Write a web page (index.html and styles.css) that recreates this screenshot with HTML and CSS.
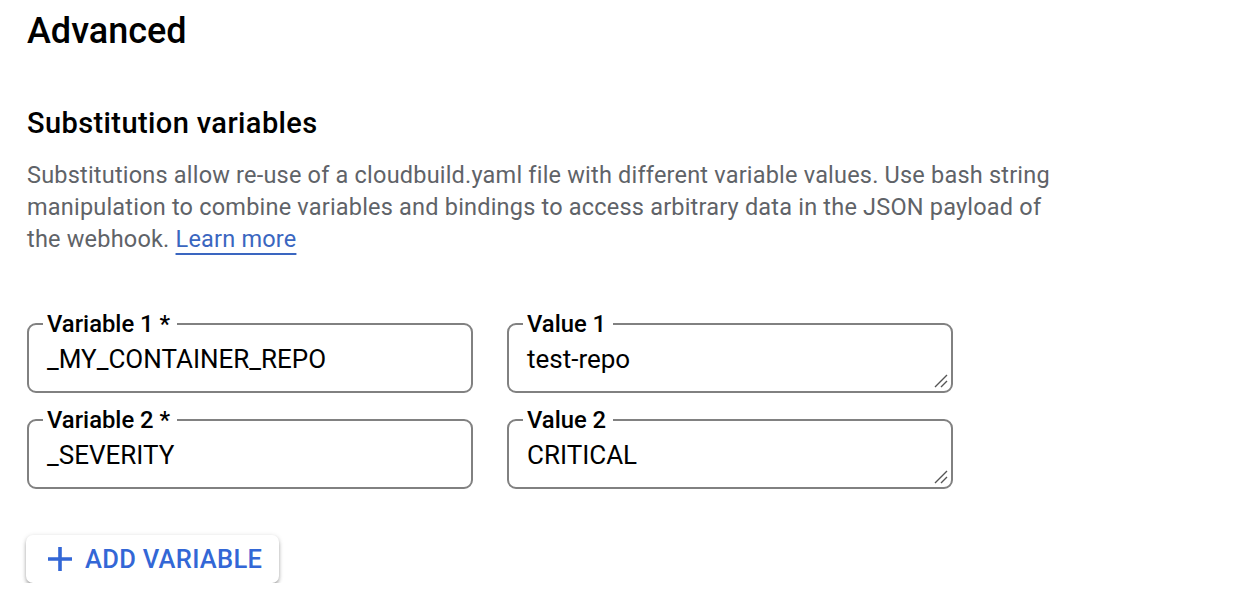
FILE: index.html
```html
<!DOCTYPE html>
<html lang="en">
<head>
<meta charset="utf-8">
<title>Advanced</title>
<link rel="stylesheet" href="styles.css">
</head>
<body>
<main class="page">
  <h1 class="title">Advanced</h1>
  <h2 class="subtitle">Substitution variables</h2>
  <p class="desc">Substitutions allow re-use of a cloudbuild.yaml file with different variable values. Use bash string manipulation to combine variables and bindings to access arbitrary data in the JSON payload of the webhook. <a class="link" href="#">Learn more</a></p>

  <div class="fields">
    <fieldset class="field">
      <legend class="label">Variable 1 *</legend>
      <div class="value">_MY_CONTAINER_REPO</div>
    </fieldset>
    <fieldset class="field">
      <legend class="label">Value 1</legend>
      <div class="value">test-repo</div>
      <svg class="resizer" width="16" height="16" viewBox="0 0 16 16"><path d="M2 14 L14 2 M8 14 L14 8" stroke="#555" stroke-width="1.4" fill="none"/></svg>
    </fieldset>
    <fieldset class="field">
      <legend class="label">Variable 2 *</legend>
      <div class="value">_SEVERITY</div>
    </fieldset>
    <fieldset class="field">
      <legend class="label">Value 2</legend>
      <div class="value">CRITICAL</div>
      <svg class="resizer" width="16" height="16" viewBox="0 0 16 16"><path d="M2 14 L14 2 M8 14 L14 8" stroke="#555" stroke-width="1.4" fill="none"/></svg>
    </fieldset>
  </div>

  <button class="add-btn" type="button">
    <svg class="plus" width="24" height="24" viewBox="0 0 24 24"><path d="M12 0 V24 M0 12 H24" stroke="#3367d6" stroke-width="3.6" fill="none"/></svg>
    <span>ADD VARIABLE</span>
  </button>
</main>
</body>
</html>
```

FILE: styles.css
```css
html, body {
  margin: 0;
  padding: 0;
  background: #ffffff;
}

body {
  font-family: Roboto, "Liberation Sans", Arial, sans-serif;
  color: #202124;
}

.page {
  padding: 0 27px;
}

.title {
  margin: 0;
  padding-top: 11px;
  font-size: 36px;
  line-height: 40px;
  font-weight: 500;
  color: #000;
}

.subtitle {
  margin: 56px 0 0 0;
  font-size: 29px;
  line-height: 32px;
  font-weight: 500;
  letter-spacing: 0.4px;
  color: #000;
}

.desc {
  margin: 20px 0 0 0;
  width: 1040px;
  font-size: 23.5px;
  line-height: 32px;
  letter-spacing: 0.2px;
  color: #5f6368;
}

.link {
  color: #3a66c0;
  text-decoration: underline;
  text-decoration-thickness: 2px;
  text-underline-offset: 6px;
}

.fields {
  margin-top: 55px;
  display: grid;
  grid-template-columns: 446px 446px;
  column-gap: 34px;
  row-gap: 13px;
}

.field {
  position: relative;
  margin: 0;
  padding: 0 14px;
  height: 79px;
  box-sizing: content-box;
  border: 2px solid #818181;
  border-radius: 9px;
  min-width: 0;
}

.label {
  padding: 0 7px 0 4px;
  font-size: 23.8px;
  line-height: 28px;
  font-weight: 500;
  color: #000;
}

.value {
  padding: 0 4px;
  margin-top: 6px;
  font-size: 26px;
  line-height: 30px;
  color: #000;
}

.resizer {
  position: absolute;
  right: 2px;
  bottom: 2px;
}

.add-btn {
  margin-top: 46px;
  margin-left: -1px;
  display: flex;
  align-items: center;
  gap: 13px;
  height: 48px;
  padding: 0 17px 0 22px;
  border: none;
  border-radius: 7px;
  background: #fff;
  box-shadow: 0 3px 4px -1px rgba(0,0,0,0.38), 0 1px 5px rgba(0,0,0,0.16);
  font-family: Roboto, "Liberation Sans", Arial, sans-serif;
  font-size: 25.5px;
  font-weight: 500;
  letter-spacing: 0.3px;
  color: #3367d6;
}

.plus {
  display: block;
}
```
